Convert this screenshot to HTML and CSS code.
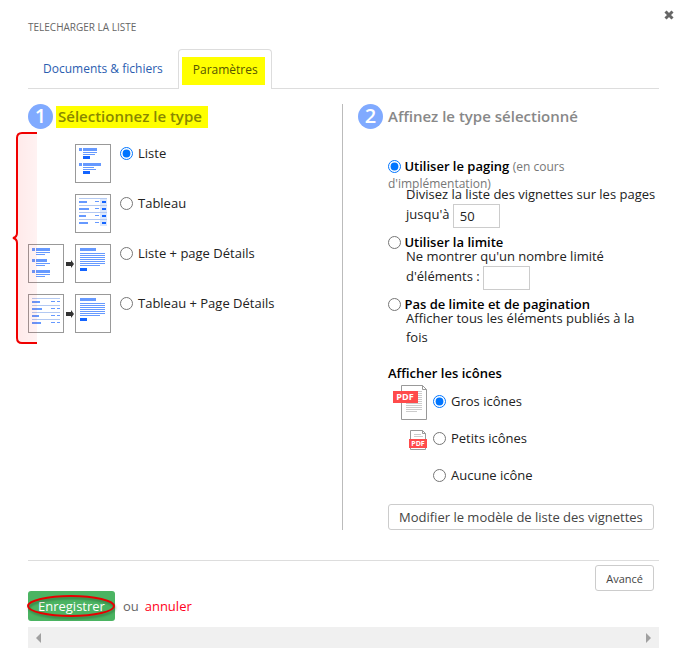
FILE: index.html
```html
<!DOCTYPE html>
<html lang="fr">
<head>
    <meta charset="UTF-8">
    <meta name="viewport" content="width=device-width, initial-scale=1.0">
    <title>Télécharger la liste</title>
    <link rel="stylesheet" href="styles.css">
</head>
<body>
    <div class="dialog">
        <button type="button" class="close-btn" aria-label="Fermer">
            <svg width="10" height="10" viewBox="0 0 10 10">
                <path d="M1.5 1.5L8.5 8.5M8.5 1.5L1.5 8.5" stroke="#666" stroke-width="3" />
            </svg>
        </button>

        <h1>TELECHARGER LA LISTE</h1>

        <nav class="tabs">
            <a href="#documents" class="tab">Documents &amp; fichiers</a>
            <a href="#parametres" class="tab active"><mark>Paramètres</mark></a>
        </nav>

        <form id="listForm">
            <div class="columns">
                <section class="column type-column">
                    <h2><span class="step">1</span><mark>Sélectionnez le type</mark></h2>

                    <div class="type-list">
                        <div class="type-row">
                            <div class="pictures">
                                <svg width="36" height="39" viewBox="0 0 36 39" shape-rendering="crispEdges">
                                    <rect x=".5" y=".5" width="35" height="38" fill="#fff" stroke="#999" />
                                    <path fill="#6699ff" d="M4 4h3v3h-3zM8 4h14v3h-14zM8 8h14v1h-14zM8 10h12v1h-12zM4 19h3v3h-3zM8 19h18v3h-18zM8 23h11v1h-11zM8 25h13v1h-13z" />
                                    <path fill="#1464ff" d="M8 12h7v3h-7zM8 27h7v3h-7z" />
                                </svg>
                            </div>
                            <input type="radio" id="typeListe" name="type" checked>
                            <label for="typeListe">Liste</label>
                        </div>

                        <div class="type-row">
                            <div class="pictures">
                                <svg width="36" height="39" viewBox="0 0 36 39" shape-rendering="crispEdges">
                                    <rect x=".5" y=".5" width="35" height="38" fill="#fff" stroke="#999" />
                                    <path fill="#dce8fc" d="M25 4h7v28h-7z" />
                                    <path fill="#b3c9f2" d="M4 4h28v1h-28zM4 11h28v1h-28zM4 18h28v1h-28zM4 25h28v1h-28z" />
                                    <path fill="#6699ff" d="M4 7h8v2h-8zM4 14h10v2h-10zM4 21h7v2h-7zM4 28h9v2h-9zM20 7h4v1h-4zM20 14h4v1h-4zM20 21h4v1h-4zM20 28h4v1h-4z" />
                                    <path fill="#1464ff" d="M27 7h4v2h-4zM27 14h4v2h-4zM27 21h4v2h-4zM27 28h4v2h-4z" />
                                </svg>
                            </div>
                            <input type="radio" id="typeTableau" name="type">
                            <label for="typeTableau">Tableau</label>
                        </div>

                        <div class="type-row">
                            <div class="pictures">
                                <svg width="36" height="39" viewBox="0 0 36 39" shape-rendering="crispEdges">
                                    <rect x=".5" y=".5" width="35" height="38" fill="#fff" stroke="#999" />
                                    <path fill="#6699ff" d="M4 4h3v3h-3zM8 4h14v3h-14zM8 8h14v1h-14zM8 10h9v1h-9zM4 15h3v3h-3zM8 15h11v3h-11zM8 19h14v1h-14zM8 21h9v1h-9zM4 26h3v3h-3zM8 26h14v3h-14zM8 30h14v1h-14zM8 32h9v1h-9z" />
                                </svg>
                                <svg width="9" height="8" viewBox="0 0 9 8">
                                    <path fill="#333" d="M1 2h5V0l3 4l-3 4V6H1z" />
                                </svg>
                                <svg width="36" height="39" viewBox="0 0 36 39" shape-rendering="crispEdges">
                                    <rect x=".5" y=".5" width="35" height="38" fill="#fff" stroke="#999" />
                                    <path fill="#6699ff" d="M5 4h16v3h-16zM5 9h25v1h-25zM5 11h25v1h-25zM5 13h25v1h-25zM5 15h25v1h-25zM5 17h25v1h-25zM5 19h25v1h-25zM5 21h20v1h-20z" />
                                    <path fill="#1464ff" d="M5 24h7v3h-7z" />
                                </svg>
                            </div>
                            <input type="radio" id="typeListeDetails" name="type">
                            <label for="typeListeDetails">Liste + page Détails</label>
                        </div>

                        <div class="type-row">
                            <div class="pictures">
                                <svg width="36" height="39" viewBox="0 0 36 39" shape-rendering="crispEdges">
                                    <rect x=".5" y=".5" width="35" height="38" fill="#fff" stroke="#999" />
                                    <path fill="#b3c9f2" d="M4 4h28v1h-28zM4 11h28v1h-28zM4 18h28v1h-28zM4 25h28v1h-28z" />
                                    <path fill="#6699ff" d="M4 7h8v2h-8zM4 14h10v2h-10zM4 21h7v2h-7zM4 28h9v2h-9zM23 7h4v1h-4zM23 14h4v1h-4zM23 21h4v1h-4zM23 28h4v1h-4zM29 7h3v1h-3zM29 14h3v1h-3zM29 21h3v1h-3zM29 28h3v1h-3z" />
                                </svg>
                                <svg width="9" height="8" viewBox="0 0 9 8">
                                    <path fill="#333" d="M1 2h5V0l3 4l-3 4V6H1z" />
                                </svg>
                                <svg width="36" height="39" viewBox="0 0 36 39" shape-rendering="crispEdges">
                                    <rect x=".5" y=".5" width="35" height="38" fill="#fff" stroke="#999" />
                                    <path fill="#6699ff" d="M5 4h16v3h-16zM5 9h25v1h-25zM5 11h25v1h-25zM5 13h25v1h-25zM5 15h25v1h-25zM5 17h25v1h-25zM5 19h25v1h-25zM5 21h20v1h-20z" />
                                    <path fill="#1464ff" d="M5 24h7v3h-7z" />
                                </svg>
                            </div>
                            <input type="radio" id="typeTableauDetails" name="type">
                            <label for="typeTableauDetails">Tableau + Page Détails</label>
                        </div>

                        <!-- Red bracket over the four types -->
                        <svg class="bracket" width="26" height="214" viewBox="0 0 26 214">
                            <defs>
                                <linearGradient id="bracketFill">
                                    <stop offset="0" stop-color="#f00" stop-opacity="0.09" />
                                    <stop offset="1" stop-color="#f00" stop-opacity="0.05" />
                                </linearGradient>
                            </defs>
                            <path fill="url(#bracketFill)" d="M25 2H10Q5 2 5 7V102Q5 106 1 107Q5 108 5 112V207Q5 212 10 212H25z" />
                            <path fill="none" stroke="#f00000" stroke-width="2" d="M25 2H10Q5 2 5 7V102Q5 106 1 107Q5 108 5 112V207Q5 212 10 212H25" />
                        </svg>
                    </div>
                </section>

                <section class="column refine-column">
                    <h2><span class="step">2</span><span class="title">Affinez le type sélectionné</span></h2>

                    <div class="refine-body">
                        <div class="option with-hint">
                            <input type="radio" id="usePaging" name="limit" checked>
                            <label for="usePaging"><strong>Utiliser le paging</strong> <span class="hint">(en cours d'implémentation)</span></label>
                            <p><label for="pageSize">Divisez la liste des vignettes sur les pages jusqu'à</label> <input type="text" id="pageSize" value="50"></p>
                        </div>
                        <div class="option">
                            <input type="radio" id="useLimit" name="limit">
                            <label for="useLimit"><strong>Utiliser la limite</strong></label>
                            <p><label for="limitSize">Ne montrer qu'un nombre limité d'éléments :</label> <input type="text" id="limitSize"></p>
                        </div>
                        <div class="option">
                            <input type="radio" id="noLimit" name="limit">
                            <label for="noLimit"><strong>Pas de limite et de pagination</strong></label>
                            <p>Afficher tous les éléments publiés à la fois</p>
                        </div>

                        <h3>Afficher les icônes</h3>
                        <div class="icon-row">
                            <div class="pictures">
                                <svg width="34" height="35" viewBox="0 0 34 35">
                                    <path fill="#fff" stroke="#999" d="M8.500 .5H29.500L33.500 4.500V34.500H8.500zM29.500 .5V4.500H33.500" />
                                    <path stroke="#ccc" d="M25 6.500h4M25 8.500h4M25 10.500h4M25 12.500h4M25 14.500h4M25 16.500h4M13 18.500h16M13 20.500h16M13 22.500h16M13 24.500h16M13 26.500h11" />
                                    <rect y="6" width="25" height="12" fill="#ff4b4b" />
                                    <text x="12" y="15" class="pdf-big">PDF</text>
                                </svg>
                            </div>
                            <input type="radio" id="iconBig" name="icons" checked>
                            <label for="iconBig">Gros icônes</label>
                        </div>
                        <div class="icon-row">
                            <div class="pictures">
                                <svg width="18" height="20" viewBox="0 0 18 20">
                                    <path fill="#fff" stroke="#999" d="M1.500 .5H13.500L16.500 3.500V19.500H1.500zM13.500 .5V3.500H16.500" />
                                    <path stroke="#ccc" d="M5 4.500h7M5 6.500h9" />
                                    <rect y="9" width="18" height="9" fill="#ff4b4b" />
                                    <text x="9" y="16" class="pdf-small">PDF</text>
                                </svg>
                            </div>
                            <input type="radio" id="iconSmall" name="icons">
                            <label for="iconSmall">Petits icônes</label>
                        </div>
                        <div class="icon-row">
                            <div class="pictures"></div>
                            <input type="radio" id="iconNone" name="icons">
                            <label for="iconNone">Aucune icône</label>
                        </div>

                        <button type="button" class="btn">Modifier le modèle de liste des vignettes</button>
                    </div>
                </section>
            </div>

            <div class="advanced">
                <button type="button" class="btn btn-small">Avancé</button>
            </div>

            <div class="actions">
                <button type="submit" class="btn-save">Enregistrer
                    <svg class="ring" width="90" height="28" viewBox="0 0 90 28">
                        <ellipse cx="45" cy="14" rx="43" ry="10" fill="none" stroke="#e60000" stroke-width="2" />
                    </svg>
                </button>
                <span>ou</span>
                <a href="#annuler">annuler</a>
            </div>
        </form>

        <div class="scrollbar">
            <svg width="5" height="10" viewBox="0 0 5 10"><path fill="#a0a0a0" d="M5 0V10L0 5z" /></svg>
            <svg width="5" height="10" viewBox="0 0 5 10"><path fill="#a0a0a0" d="M0 0V10L5 5z" /></svg>
        </div>
    </div>
</body>
</html>
```
FILE: styles.css
```css
:root {
    --text-color: #222;
    --muted-color: #777;
    --border-color: #ddd;
    --link-color: #2a5db0;
    --step-color: #80aaff;
    --highlight-color: #ff0;
}

* {
    margin: 0;
    padding: 0;
    box-sizing: border-box;
}

body {
    background-color: white;
    color: var(--text-color);
    font-family: "Open Sans", sans-serif;
    font-size: 13px;
    line-height: 19px;
}

button, input {
    font-family: inherit;
    font-size: 13px;
    color: inherit;
}

button {
    cursor: pointer;
}

svg {
    display: block;
    flex: none;
}

mark {
    background-color: var(--highlight-color);
    color: inherit;
}

.dialog {
    position: relative;
    padding: 17px 29px 20px 28px;
}

.close-btn {
    position: absolute;
    top: 10px;
    right: 14px;
    border: none;
    background: none;
}

h1 {
    font-size: 10px;
    font-weight: normal;
    line-height: 20px;
    color: #666;
}

.tabs {
    display: flex;
    height: 40px;
    margin-top: 12px;
    border-bottom: 1px solid var(--border-color);
}

.tab {
    height: 40px;
    padding: 0 15px;
    font-size: 12px;
    line-height: 40px;
    color: var(--link-color);
    text-decoration: none;
}

.tab.active {
    padding: 7px 6px 0 3px;
    border: 1px solid var(--border-color);
    border-bottom: none;
    border-radius: 4px 4px 0 0;
    background-color: white;
    color: #555500;
}

.tab.active mark {
    display: block;
    padding: 0 7px 0 11px;
    line-height: 26px;
    height: 28px;
}

.columns {
    display: grid;
    grid-template-columns: 1fr 1fr;
    gap: 1px;
    margin-top: 15px;
}

.type-column {
    border-right: 1px solid #bbb;
}

.refine-column {
    padding-left: 14px;
}

h2 {
    display: flex;
    align-items: center;
    gap: 5px;
    height: 25px;
    font-size: 15px;
    font-weight: 600;
    color: #888;
}

.type-column h2 {
    gap: 3px;
}

h2 mark, h2 .title {
    height: 22px;
    line-height: 20px;
}

h2 mark {
    padding: 0 6px 0 2px;
    color: #888800;
}

.step {
    width: 25px;
    height: 25px;
    border-radius: 50%;
    background-color: var(--step-color);
    color: white;
    font-size: 20px;
    line-height: 24px;
    text-align: center;
}

.type-list {
    position: relative;
    display: grid;
    gap: 11px;
    margin-top: 15px;
}

.type-row, .icon-row {
    display: flex;
}

.type-row input {
    margin: 3px 5px 0 9px;
}

input[type="radio"] {
    width: 13px;
    height: 13px;
    flex: none;
    accent-color: #0075ff;
}

.pictures {
    display: flex;
    align-items: center;
    justify-content: flex-end;
    gap: 1px;
}

.type-row .pictures {
    width: 83px;
}

.bracket {
    position: absolute;
    top: -13px;
    left: -16px;
    pointer-events: none;
}

.refine-body {
    padding-left: 30px;
    padding-top: 29px;
}

.option {
    margin-bottom: 6px;
    line-height: 17px;
}

.option input[type="radio"] {
    vertical-align: -2px;
}

.option strong, h3 {
    font-size: 13px;
    font-weight: 600;
    color: black;
}

.hint {
    font-size: 12px;
    color: var(--muted-color);
}

.option p {
    margin-top: -4px;
    padding-left: 18px;
    line-height: 19px;
}

.option.with-hint p {
    margin-top: -7px;
}

.option input[type="text"] {
    width: 47px;
    height: 24px;
    padding: 0 6px;
    border: 1px solid #ccc;
    vertical-align: middle;
}

h3 {
    margin-top: 16px;
    line-height: 20px;
}

.icon-row {
    align-items: center;
    height: 37px;
}

.icon-row .pictures {
    width: 39px;
    padding-top: 2px;
}

.icon-row input {
    margin: 0 5px 0 6px;
}

.pdf-big, .pdf-small {
    fill: white;
    font-family: "Open Sans", sans-serif;
    font-weight: 700;
    text-anchor: middle;
}

.pdf-big {
    font-size: 9px;
}

.pdf-small {
    font-size: 7px;
}

.btn {
    height: 26px;
    padding: 0 10px;
    border: 1px solid #ccc;
    border-radius: 3px;
    background-color: white;
    color: #444;
}

.refine-body .btn {
    margin-top: 10px;
}

.btn-small {
    font-size: 11px;
}

.advanced {
    display: flex;
    justify-content: flex-end;
    margin-top: 30px;
    padding: 4px 5px 0 0;
    border-top: 1px solid var(--border-color);
}

.actions {
    display: flex;
    align-items: center;
    gap: 8px;
    color: #666;
}

.actions a {
    color: #ff0022;
    text-decoration: none;
}

.actions span {
    margin-right: -2px;
}

.btn-save {
    position: relative;
    height: 30px;
    padding: 0 10px;
    border: none;
    border-radius: 3px;
    background-color: #4bb462;
    color: white;
}

.ring {
    position: absolute;
    top: 1px;
    left: -2px;
    filter: drop-shadow(1px 2px 1px rgba(0, 0, 0, 0.3));
}

.scrollbar {
    display: flex;
    align-items: center;
    justify-content: space-between;
    height: 21px;
    margin-top: 6px;
    padding: 0 8px;
    background-color: #f0f0f0;
}
```
